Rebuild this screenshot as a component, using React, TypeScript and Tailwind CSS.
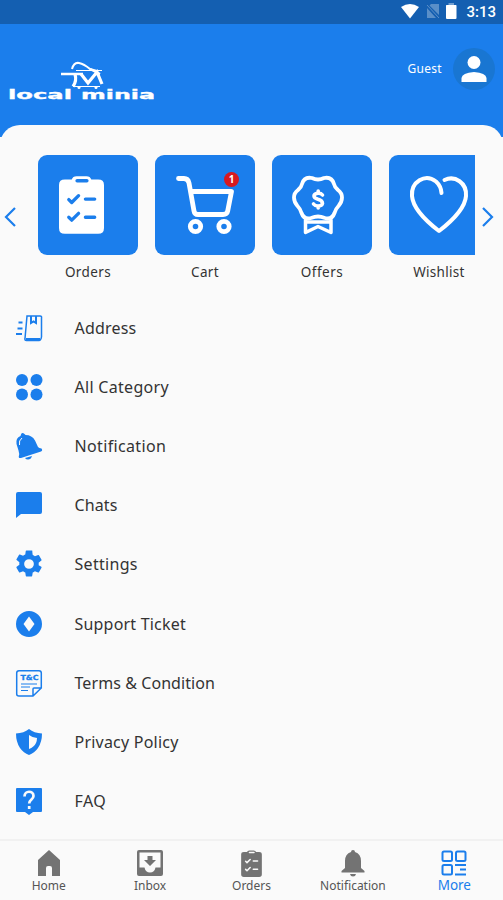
import type { ReactNode } from 'react';

const OrdersIcon = ({ className, mark }: { className: string; mark: string }) => (
  <svg viewBox="0 0 46 60" className={className} fill="none">
    <path d="M6 4.500H13Q14 1 18 1H28Q32 1 33 4.500H40Q46 4.500 46 10V54Q46 60 40 60H6Q0 60 0 54V10Q0 4.500 6 4.500Z" fill="currentColor" />
    <path d="M18.500 5.700H28.500" stroke={mark} strokeWidth="3.500" strokeLinecap="round" />
    <path d="M10 25L13 28L20 21M10 43L13 46L20 39M27 24.500H36.500M27 43H36.500" stroke={mark} strokeWidth="3.400" strokeLinecap="round" strokeLinejoin="round" />
  </svg>
);

const CartIcon = () => (
  <svg viewBox="0 0 100 100" className="h-full w-full" fill="none" stroke="white" strokeWidth="4.800" strokeLinecap="round" strokeLinejoin="round">
    <path d="M23.500 23.500H29Q33 23.500 34 28L39 56Q39.600 59.500 43 59.500H68Q72 59.500 72.700 56L76.500 36.500H36" />
    <circle cx="40.500" cy="71.500" r="5.200" />
    <circle cx="69" cy="71.500" r="5.200" />
  </svg>
);

const OffersIcon = () => (
  <svg viewBox="0 0 100 100" className="h-full w-full" fill="none" stroke="white" strokeWidth="3.800" strokeLinecap="round" strokeLinejoin="round">
    <path d="M46 24.500Q49 24.500 52 23Q60 21.500 62 29Q62.500 32 66 35Q70 38 70 42.500Q70 47 66.500 51Q63.500 54 62.500 58Q60 65 53 63Q49 61.500 46 61.500Q43 61.500 39 63Q32 65 29.500 58Q28.500 54 25.500 51Q22 47 22 42.500Q22 38 26 35Q29.500 32 30 29Q32 21.500 40 23Q43 24.500 46 24.500Z" />
    <path d="M33.500 65V77.500L46 71.500L59 77.500V65M34.500 67H57.500" strokeWidth="3.500" />
    <path d="M50.500 40Q49 38 45.800 38.300Q42 38.800 42 41Q42 43 46 44.300Q50.500 45.500 50.500 48.500Q50 51 46 51Q43 51 41.500 49M46.200 36V38M46.200 51V53" strokeWidth="3.600" />
  </svg>
);

const HeartIcon = () => (
  <svg viewBox="0 0 100 100" className="h-full w-full" fill="none" stroke="white" strokeWidth="4" strokeLinecap="round" strokeLinejoin="round">
    <path d="M52.500 38Q52 31 47 26.500C36 18 22 27 23 41C24 54 37 66 50 76C63 66 76 54 77 41C78 28 66 20 55.500 25" />
  </svg>
);

const ArrowIcon = ({ d }: { d: string }) => (
  <svg viewBox="0 0 12 20" className="h-5 w-3" fill="none" stroke="#1b7eec" strokeWidth="2.200">
    <path d={d} />
  </svg>
);

const shortcuts = [
  { label: 'Orders', tracking: 'tracking-[0.400px]', icon: <OrdersIcon className="mb-px mr-3.5 h-[59px] w-[45px] text-white" mark="#1b7eec" /> },
  { label: 'Cart', tracking: 'tracking-[0.300px]', icon: <CartIcon />, count: 1 },
  { label: 'Offers', tracking: 'tracking-[0.500px]', icon: <OffersIcon /> },
  { label: 'Wishlist', tracking: 'tracking-[0.300px]', icon: <HeartIcon /> },
];

const Icon = ({ children }: { children: ReactNode }) => (
  <svg viewBox="0 0 26 26" className="h-[26px] w-[26px] shrink-0 overflow-visible" fill="#1b7eec">
    {children}
  </svg>
);

const menu = [
  {
    label: 'Address',
    tracking: 'tracking-[0.200px]',
    icon: (
      <g fill="none" stroke="#1b7eec" strokeWidth="1.600">
        <path d="M11 1H24Q26 1 25.500 3V22Q25 25.500 23 25.500H10.500Q8.500 25.500 9 23.500Z" strokeWidth="1.500" />
        <path d="M15 1V8L17.500 6.500L20 8V1M10 24H24" strokeWidth="2" />
        <path d="M2.500 7.500H6.500M1.500 13.500H6.500M0 19H6" strokeWidth="2.200" />
      </g>
    ),
  },
  {
    label: 'All Category',
    tracking: 'tracking-[0.300px]',
    icon: (
      <>
        <circle cx="6" cy="6" r="6" />
        <circle cx="20.500" cy="6" r="6" />
        <circle cx="6" cy="20.500" r="6" />
        <circle cx="20.500" cy="20.500" r="6" />
      </>
    ),
  },
  {
    label: 'Notification',
    tracking: 'tracking-[0.350px]',
    icon: (
      <>
        <path d="M5 1.500Q6-1 8.500 1L9.500 2Q16 2 19 7.500L22 14Q23 15 25.500 15.500Q27 17.500 25 18.500L5 25Q2 25.500 3 22.500Q3.500 21 2.500 17.500L0.500 11Q-0.500 5 4.500 3Z" />
        <path d="M9 25L16 23Q15 26.500 12 26.500Q10 26.500 9 25Z" />
        <path d="M3.500 12Q2.500 7.500 6 5" fill="none" stroke="#fafafa" strokeWidth="1" />
      </>
    ),
  },
  { label: 'Chats', tracking: 'tracking-[0.100px]', icon: <path d="M2 0H24Q26 0 26 2V20Q26 22 24 22H5L0 26V2Q0 0 2 0Z" /> },
  {
    label: 'Settings',
    tracking: 'tracking-[0.300px]',
    icon: (
      <path
        fillRule="evenodd"
        transform="translate(-3.200 -3.200) scale(1.350)"
        d="M19.140 12.940c.04-.3.060-.61.060-.94s-.02-.64-.07-.94l2.030-1.580a.49.49 0 0 0 .12-.61l-1.920-3.320a.49.49 0 0 0-.59-.22l-2.390.96a7 7 0 0 0-1.620-.94l-.36-2.540A.48.48 0 0 0 13.920 2h-3.840a.48.48 0 0 0-.48.410l-.36 2.540a7 7 0 0 0-1.620.94l-2.390-.96a.49.49 0 0 0-.59.220L2.720 8.470a.49.49 0 0 0 .12.610l2.030 1.580c-.05.3-.07.62-.07.94s.02.640.07.940l-2.030 1.580a.49.49 0 0 0-.12.610l1.920 3.320c.12.220.370.290.590.220l2.390-.96c.5.380 1.040.700 1.620.940l.36 2.540c.05.240.240.410.480.410h3.840c.24 0 .440-.17.470-.41l.36-2.540c.59-.24 1.130-.56 1.620-.94l2.390.96c.22.080.470 0 .59-.22l1.920-3.320a.49.49 0 0 0-.12-.61zM12 15.600a3.600 3.600 0 1 1 0-7.200 3.600 3.600 0 0 1 0 7.200z"
      />
    ),
  },
  {
    label: 'Support Ticket',
    tracking: 'tracking-[0.200px]',
    icon: <path fillRule="evenodd" d="M13 0A13 13 0 1 1 13 26A13 13 0 0 1 13 0ZM13 5.500L7.500 13L13 20.500L18.500 13Z" />,
  },
  {
    label: 'Terms & Condition',
    tracking: 'tracking-[0.080px]',
    icon: (
      <>
        <path d="M3 .7H23Q25.300 .7 25.300 3V18L17 26H3Q.7 26 .7 24V3Q.7 .7 3 .7ZM25 18H18Q17 18 17 19V26" fill="none" stroke="#1b7eec" strokeWidth="1.500" />
        <text x="4.500" y="10" fontSize="7" fontWeight="900" fontFamily="DejaVu Sans, sans-serif" stroke="#1b7eec" strokeWidth=".3" textLength="18" lengthAdjust="spacingAndGlyphs">T&amp;C</text>
        <path d="M5 14H21M5 17H14M5 20.500H12" stroke="#1b7eec" strokeWidth="1.200" />
      </>
    ),
  },
  {
    label: 'Privacy Policy',
    tracking: 'tracking-[0.220px]',
    icon: (
      <path
        fillRule="evenodd"
        d="M13 0Q18 4 26 4.500Q26 13 22 19Q18.500 24 13 26Q7.500 24 4 19Q0 13 0 4.500Q8 4 13 0ZM13 6V20Q18 18 20 14Q21 11.500 21 9Q16 8.500 13 6Z"
      />
    ),
  },
  {
    label: 'FAQ',
    tracking: 'tracking-[0.400px]',
    icon: (
      <>
        <path d="M1 0H25Q26 0 26 1V23Q26 24 25 24H17L13 27L9 24H1Q0 24 0 23V1Q0 0 1 0Z" />
        <path d="M8.500 8.500C8.500 2 17.500 2.500 17.500 8C17.500 11.500 13.200 11.500 13.200 15.500M13.200 18V21" fill="none" stroke="#fafafa" strokeWidth="2.700" />
      </>
    ),
  },
];

const tabs = [
  {
    label: 'Home',
    icon: (
      <svg viewBox="0 0 24 26" className="h-[26px] w-6" fill="currentColor">
        <path d="M12 0L1 10V26H9V18Q9 16 11 16H13Q15 16 15 18V26H23V10Z" />
      </svg>
    ),
  },
  {
    label: 'Inbox',
    icon: (
      <svg viewBox="0 0 26 26" className="h-[26px] w-[26px]" fill="currentColor">
        <path fillRule="evenodd" d="M2 0H24Q26 0 26 2V24Q26 26 24 26H2Q0 26 0 24V2Q0 0 2 0ZM2.500 2.500V17.500H7.500Q8.500 22.500 13 22.500Q17.500 22.500 18.500 17.500H23.500V2.500Z" />
        <path d="M10.500 6H15.500V10H19L13 16L7 10H10.500Z" />
      </svg>
    ),
  },
  { label: 'Orders', icon: <OrdersIcon className="h-[27px] w-[21px]" mark="#fafafa" /> },
  {
    label: 'Notification',
    icon: (
      <svg viewBox="0 0 24 27" className="h-[27px] w-6" fill="currentColor">
        <path d="M10 2Q10 0 12 0Q14 0 14 2Q20 4 20 11V18L23.500 21V22.500H.5V21L4 18V11Q4 4 10 2ZM9 24H15Q14.500 26.500 12 26.500Q9.500 26.500 9 24Z" />
      </svg>
    ),
  },
  {
    label: 'More',
    active: true,
    icon: (
      <svg viewBox="0 0 26 26" className="h-[26px] w-[26px]" fill="none" stroke="currentColor" strokeWidth="2">
        <rect x="1.500" y="1.500" width="9.500" height="9.500" rx="1.500" />
        <rect x="15" y="1.500" width="9.500" height="9.500" rx="1.500" />
        <rect x="1.500" y="15" width="9.500" height="9.500" rx="1.500" />
        <path d="M14 15H25M19 19.500H25M14 24.500H25" strokeWidth="1.800" />
      </svg>
    ),
  },
];

function StatusBar() {
  return (
    <div className="flex h-6 shrink-0 items-center justify-end bg-[#145fb1] pr-[7px] text-white">
      <svg viewBox="0 0 80 24" className="h-6 w-20" fill="white">
        <path d="M16 7Q25 1 34 7L25 18.500Z" />
        <path d="M46 4H54V15L44.500 5.500ZM42 8L51 18H42Z" opacity=".3" />
        <path d="M42 5L54 18" stroke="white" strokeWidth="1" opacity=".3" />
        <path d="M61.500 5H71Q71.500 5 71.500 6V18Q71.500 19 70.500 19H62Q61 19 61 18V6Q61 5 61.500 5Z" />
        <path d="M63.500 3H69V5H63.500Z" opacity=".4" />
      </svg>
      <span className="ml-[1px] font-[Roboto,sans-serif] text-[15px] font-medium leading-6">3:13</span>
    </div>
  );
}

function Header() {
  return (
    <header className="flex h-[113px] shrink-0 justify-between bg-[#1b7eec] pl-2 pr-2 pt-6">
      <svg viewBox="0 0 150 44" className="mt-3 h-11 w-[150px]" fill="white">
        <path d="M64 9Q66 2 71 3Q76 4 82 9L89 11" fill="none" stroke="white" strokeWidth="2" strokeLinejoin="round" />
        <path d="M53 14H75" stroke="white" strokeWidth="2.500" />
        <path d="M68 10.500H94M65 26.500H92" fill="none" stroke="white" strokeWidth="1.200" />
        <path d="M67 14Q69 21 65 26.500M73 14L80 23L89 12L94 24" fill="none" stroke="white" strokeWidth="3.200" />
        <path d="M82 9L92 14" stroke="white" strokeWidth="2.500" />
        <circle cx="71" cy="27.500" r="1.500" />
        <circle cx="88" cy="27.500" r="1.500" />
        <g fontSize="11.500" fontWeight="700" fontFamily="DejaVu Sans, sans-serif" stroke="white" strokeWidth=".3">
          <text x="0" y="39" textLength="64" lengthAdjust="spacingAndGlyphs">local</text>
          <text x="73" y="39" textLength="74" lengthAdjust="spacingAndGlyphs">minia</text>
        </g>
      </svg>
      <div className="flex h-[42px] items-center gap-[11px]">
        <span className="text-[12px] tracking-[0.300px] text-white">Guest</span>
        <span className="flex h-[42px] w-[42px] items-center justify-center rounded-full bg-[#1976d2]">
          <svg viewBox="0 0 26 26" className="h-[26px] w-[26px]" fill="white">
            <circle cx="13" cy="6.500" r="6.500" />
            <path d="M.5 26V22Q1 17 13 16Q25 17 25.500 22V26Z" />
          </svg>
        </span>
      </div>
    </header>
  );
}

function App() {
  return (
    <div className="flex h-[900px] w-[503px] flex-col overflow-hidden bg-[#fafafa] font-['Noto_Sans','Open_Sans',sans-serif] text-[#333333]">
      <StatusBar />
      <Header />
      <main className="-mt-3 flex-1 rounded-t-[20px] bg-[#fafafa] pt-[30px]">
        <section className="flex">
          <div className="flex h-[124px] w-[38px] shrink-0 items-center pl-1">
            <ArrowIcon d="M11 1L2 10L11 19" />
          </div>
          <div className="flex w-[437px] shrink-0 gap-[17px] overflow-hidden">
            {shortcuts.map((item) => (
              <div key={item.label} className="w-[100px] shrink-0">
                <div className="relative flex h-[100px] items-center justify-center rounded-[9px] bg-[#1b7eec]">
                  {item.icon}
                  {item.count && (
                    <span className="absolute left-[69px] top-[17px] flex h-[15px] w-[15px] items-center justify-center rounded-full bg-[#d71920] text-[10px] font-bold text-white">
                      {item.count}
                    </span>
                  )}
                </div>
                <div className={`mt-[7px] text-center text-[13.500px] leading-5 ${item.tracking}`}>{item.label}</div>
              </div>
            ))}
          </div>
          <div className="flex h-[124px] flex-1 items-center pl-[7px]">
            <ArrowIcon d="M1 1L10 10L1 19" />
          </div>
        </section>
        <nav className="mt-4">
          {menu.map((item) => (
            <div key={item.label} className="flex h-[59.2px] items-center pl-[15.500px]">
              <Icon>{item.icon}</Icon>
              <span className={`ml-[33px] whitespace-nowrap text-base ${item.tracking}`}>{item.label}</span>
            </div>
          ))}
        </nav>
      </main>
      <footer className="-ml-[2px] flex h-[61px] w-[507px] shrink-0 border-t-2 border-[#f1f1f1] bg-[#fafafa] pt-2">
        {tabs.map((tab) => (
          <div key={tab.label} className={`flex flex-1 flex-col items-center ${tab.active ? 'text-[#1b7eec]' : 'text-[#737373]'}`}>
            <div className="flex h-7 items-center">{tab.icon}</div>
            <span className={tab.active ? 'text-[13.500px] leading-4' : 'text-[12px] leading-[17px] text-[#555555]'}>{tab.label}</span>
          </div>
        ))}
      </footer>
    </div>
  );
}

export default App;
